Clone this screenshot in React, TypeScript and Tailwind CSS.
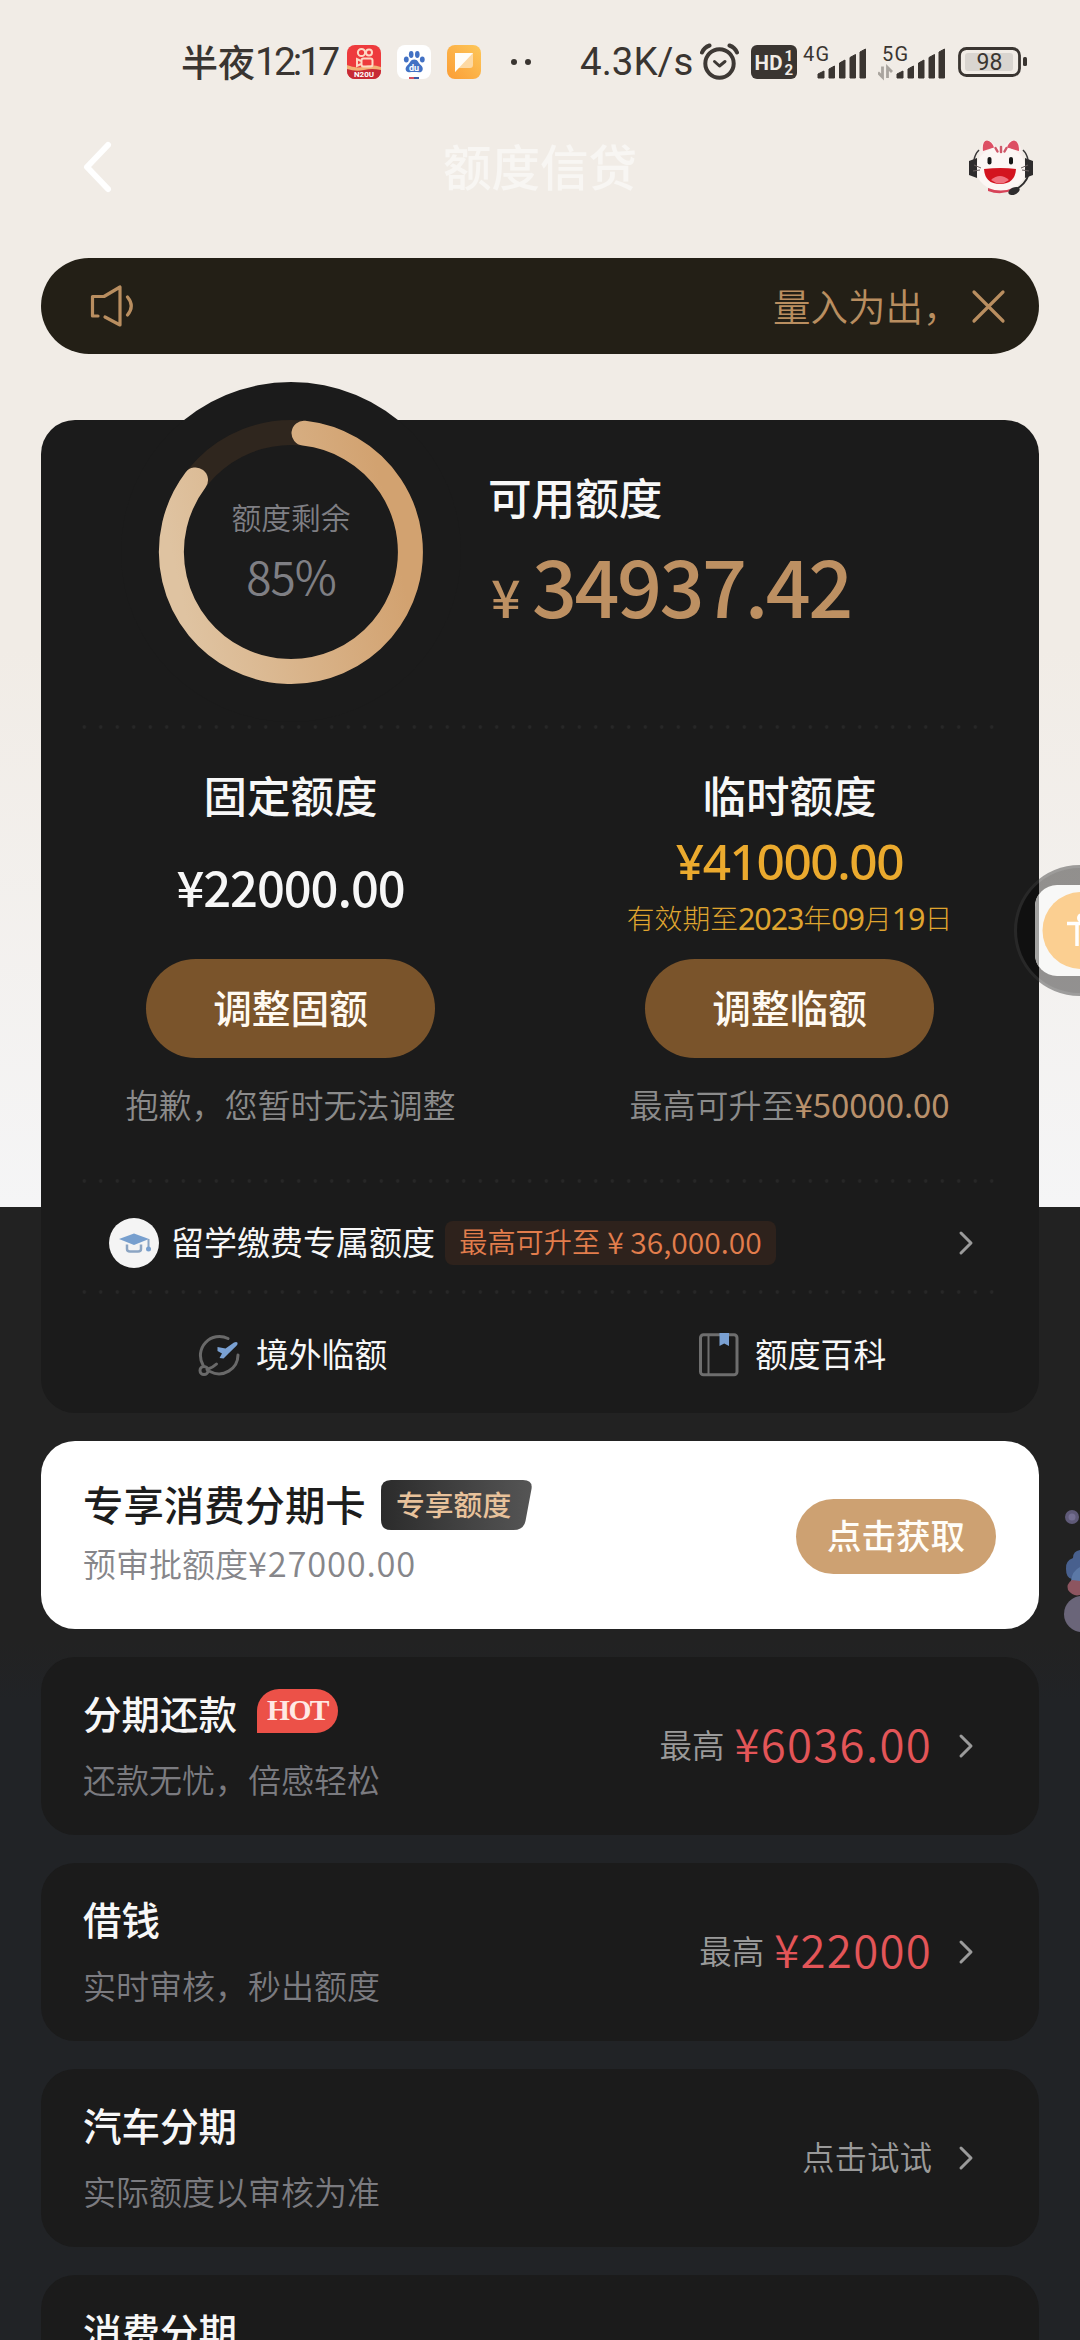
import type { ReactNode } from 'react';
import clsx from 'clsx';

type Product = {
  title: string;
  desc?: string;
  prefix?: string;
  amount?: string;
  action?: string;
  hot?: boolean;
};

const products: Product[] = [
  { title: '分期还款', desc: '还款无忧，倍感轻松', prefix: '最高', amount: '¥6036.00', hot: true },
  { title: '借钱', desc: '实时审核，秒出额度', prefix: '最高', amount: '¥22000' },
  { title: '汽车分期', desc: '实际额度以审核为准', action: '点击试试' },
  { title: '消费分期' },
];

// Roboto for the status bar, Noto Sans where a plain "1" is needed
const roboto = "font-['Roboto','Noto_Sans_CJK_SC',sans-serif]";
const noto = "font-['Noto_Sans','Noto_Sans_CJK_SC',sans-serif]";

/* ---------- icons ---------- */

const Chevron = () => (
  <svg className="h-[26px] w-[16px] shrink-0" viewBox="0 0 16 26" fill="none" stroke="#9b9b9b" strokeWidth="3" strokeLinecap="round" strokeLinejoin="round">
    <path d="M3 3l10 10L3 23" />
  </svg>
);

const KuaishouIcon = () => (
  <svg className="h-[34px] w-[34px]" viewBox="0 0 34 34">
    <rect width="34" height="34" rx="8" fill="#ee3b3d" />
    <path d="M0 20q9 4 17 2t17 0v4a8 8 0 0 1-8 8H8a8 8 0 0 1-8-8z" fill="#c72a35" />
    <path d="M0 20q9 4 17 1.500t17 .5v3q-9-2-17 0T0 24z" fill="#f3b174" />
    <g fill="none" stroke="#fdd9c4" strokeWidth="2">
      <circle cx="14.500" cy="7.500" r="3.600" />
      <circle cx="22" cy="7.500" r="3" />
      <rect x="14.500" y="13.500" width="11" height="8" rx="2" />
      <path d="M14 16l-4-2v7l4-2" />
    </g>
    <text x="17" y="32" fontSize="8" fontWeight="700" fontFamily="Roboto" fill="#fff" textAnchor="middle">N20U</text>
  </svg>
);

const BaiduIcon = () => (
  <svg className="h-[34px] w-[34px]" viewBox="0 0 34 34">
    <rect width="34" height="34" rx="8" fill="#fff" />
    <g fill="#4271c4">
      <ellipse cx="9.300" cy="14.500" rx="2.400" ry="3" />
      <ellipse cx="14.200" cy="9.500" rx="2.300" ry="3.400" />
      <ellipse cx="20.300" cy="9.500" rx="2.300" ry="3.400" />
      <ellipse cx="25.300" cy="14.500" rx="2.400" ry="3" />
      <path d="M17.200 14.500c4 0 4 3.500 6.500 5.500 4 3.500 1.500 7.500-1.500 7.300-3-.3-7-.3-10 0-3.500.2-5.200-4.300-1.500-7.300 2.500-2 2.500-5.500 6.500-5.500z" />
    </g>
    <text x="17" y="25.500" fontSize="9" fontWeight="700" fontFamily="Roboto" fill="#fff" textAnchor="middle">du</text>
    <path d="M12 33h5" stroke="#d5505c" strokeWidth="2" />
    <path d="M17 33h5" stroke="#3d5aa5" strokeWidth="2" />
  </svg>
);

const NoteIcon = () => (
  <svg className="h-[34px] w-[34px]" viewBox="0 0 34 34">
    <defs>
      <linearGradient id="noteBg" x1="0" y1="1" x2="1" y2="0">
        <stop offset="0" stopColor="#fb9d35" />
        <stop offset="1" stopColor="#fdc75a" />
      </linearGradient>
    </defs>
    <rect width="34" height="34" rx="8" fill="url(#noteBg)" />
    <path d="M8 8h18v12q0 3-3 3H11.500L8 27z" fill="#fdd9a3" />
    <path d="M8 8h18L8 27z" fill="#fffdf8" />
  </svg>
);

const AlarmIcon = () => (
  <svg className="h-[38px] w-[40px]" viewBox="0 0 40 38" fill="none" stroke="#3e3935" strokeLinecap="round">
    <circle cx="19.500" cy="20.500" r="14.200" strokeWidth="4" />
    <path d="M14.500 18.500l5 4.500 5.500-4.500" strokeWidth="3" strokeLinejoin="round" />
    <path d="M2 9.500Q4 4.500 9.500 2.500M37 9.500Q35 4.500 29.500 2.500" strokeWidth="4" />
  </svg>
);

const HdIcon = () => (
  <svg className="h-[34px] w-[46px]" viewBox="0 0 46 34">
    <rect width="46" height="34" rx="6" fill="#3a3531" />
    <g fill="#f1ece6" fontFamily="Roboto" fontWeight="700">
      <text x="3.500" y="24.500" fontSize="20.500" textLength="28">HD</text>
      <text x="33.500" y="15.500" fontSize="15">1</text>
      <text x="33.500" y="29.500" fontSize="15">2</text>
    </g>
  </svg>
);

const Signal = ({ label, data }: { label: string; data?: boolean }) => (
  <svg className="h-[40px] w-[68px]" viewBox="0 -2 68 40">
    <text x="4" y="17" fontSize="20" fontFamily="Roboto" fill="#3a3531" textLength="26">{label}</text>
    <path d="M19 34v-4l6-3v7zM30 34V25l5.500-3v12zM40.500 34V19l5.500-3v18zM51 34V13.500l5.500-3V34zM61 34V8l5.500-3v29z" fill="#3a3531" stroke="#3a3531" strokeLinejoin="round" />
    {data && <path d="M4.500 22.500V33L0 28.500M9.500 34V23.500L14 28" fill="none" stroke="#a9a49e" strokeWidth="2.800" />}
  </svg>
);

const Battery = () => (
  <svg className="h-[30px] w-[69px]" viewBox="0 0 69 30">
    <rect x="1.500" y="1.500" width="60" height="27" rx="7" fill="none" stroke="#3a3531" strokeWidth="2.800" />
    <rect x="7" y="6" width="48" height="18" rx="3" fill="#d9d5d0" />
    <rect x="65" y="10" width="4" height="9" rx="1.500" fill="#3a3531" />
    <text x="31.500" y="23" fontSize="23" fontFamily="Roboto" fill="#3a3531" textAnchor="middle">98</text>
  </svg>
);

const CatService = () => (
  <svg className="h-[58px] w-[66px]" viewBox="0 0 66 58">
    <path d="M11 24Q12 3 18 2q6 0 11 8zM55 24Q54 3 46 2q-6 0-11 8z" fill="#f9efed" />
    <path d="M15 13Q14 3 19 2.500q5 1 7 7zM51 13Q51 3 46 2.500q-5 1-7 7z" fill="#dd4f64" />
    <ellipse cx="33" cy="31" rx="25" ry="22" fill="#fcf6f4" />
    <path d="M33 9v5M27.500 10l2 3.500M38.500 10l-2 3.500" stroke="#cf5869" strokeWidth="2.500" strokeLinecap="round" />
    <path d="M20 50q13 5 25 0v2q-12 6-25 1z" fill="#d74358" />
    <path d="M1 23l8-3v20l-8-3zM65 23l-8-3v20l8-3z" fill="#2e2c2d" />
    <path d="M6 22Q7 16 11 12M60 22Q59 16 55 12" stroke="#3a3839" strokeWidth="1.500" fill="none" />
    <path d="M60 38q-3 9-15 15" stroke="#2e2c2d" strokeWidth="2" fill="none" />
    <ellipse cx="46" cy="53" rx="6" ry="3.500" transform="rotate(-25 46 53)" fill="#2e2c2d" />
    <rect x="19.500" y="19" width="4" height="7.500" rx="2" fill="#171717" />
    <rect x="41" y="19" width="4" height="7.500" rx="2" fill="#171717" />
    <path d="M16 31q17-2 32 0-1 15-16 15T16 31z" fill="#d3141f" />
    <path d="M23 42q9-8 18 0-9 7-18 0z" fill="#f0727f" />
    <path d="M6 27l7 3M5 33l7-1M60 27l-7 3M61 33l-7-1" stroke="#6a5f5f" strokeWidth="1" />
  </svg>
);

const SpeakerIcon = () => (
  <svg className="h-[44px] w-[46px]" viewBox="0 0 46 44" fill="none" stroke="#b98e60" strokeWidth="3.200" strokeLinecap="round" strokeLinejoin="round">
    <path d="M8 32H2.500V12.500H14L30 3v38L15 33" />
    <path d="M37.500 13q7.500 9 0 18" />
  </svg>
);

const StudyIcon = () => (
  <svg className="h-[50px] w-[50px]" viewBox="0 0 50 50">
    <circle cx="25" cy="25" r="25" fill="#f4f4f4" />
    <path d="M10 21l15-5.500L40 21l-15 6z" fill="#779fce" />
    <path d="M39.500 21v9" stroke="#8ba4c2" strokeWidth="2" />
    <circle cx="39.500" cy="31" r="2.500" fill="#779fce" />
    <path d="M18 26.500v4.500q0 2.500 3 2.500h8q3 0 3-2.500v-4.500" fill="none" stroke="#8ba4c2" strokeWidth="2.500" />
  </svg>
);

const OverseasIcon = () => (
  <svg className="h-[44px] w-[42px]" viewBox="0 0 42 44" fill="none" strokeLinecap="round">
    <path d="M30 5.500A19 19 0 0 0 5 32M40 22A19 19 0 0 1 12 38.500" stroke="#696969" strokeWidth="3" />
    <circle cx="6" cy="37.500" r="4" stroke="#696969" strokeWidth="3" />
    <path d="M9 36.500q6-2 9.500-5.500" stroke="#696969" strokeWidth="3" />
    <path d="M19.500 14l8 1.500 8.500-6q2.500-1.200 3.500.2.500 1.400-1 3L31 20l-5.500 5.500-4-.5 2.500-4.500-4.500-2.500z" fill="#7aa1d3" />
  </svg>
);

const BookIcon = () => (
  <svg className="h-[44px] w-[40px]" viewBox="0 0 40 44">
    <rect x="1.500" y="1.800" width="36.500" height="40" rx="3" fill="none" stroke="#6e6e6e" strokeWidth="3" />
    <path d="M9.500 2v40" stroke="#6e6e6e" strokeWidth="2" />
    <path d="M20.500 0H30v13l-4.800-2.500-4.700 2.500z" fill="#7aa1d3" />
  </svg>
);

/* ---------- sections ---------- */

const StatusBar = () => (
  <div className="flex h-[124px] items-center pl-[181px] text-[#3a3531]">
    <div className="flex w-[166px] items-center whitespace-nowrap text-[37px] font-medium leading-[50px]">
      <span className="-mt-[2px]">半夜</span>
      <span className={clsx(roboto, 'text-[39px] font-normal tracking-[-3px]')}>12:17</span>
    </div>
    <div className="flex gap-4">
      <KuaishouIcon />
      <BaiduIcon />
      <NoteIcon />
    </div>
    <div className="ml-[30px] flex gap-[8px]">
      <i className="h-[6px] w-[6px] rounded-full bg-[#3a3531]"></i>
      <i className="h-[6px] w-[6px] rounded-full bg-[#3a3531]"></i>
    </div>
    <div className={clsx(roboto, 'ml-[49px] w-[120px] text-[38.5px] leading-[50px]')}>4.3K/s</div>
    <AlarmIcon />
    <div className="ml-[11px] flex"><HdIcon /></div>
    <div className="ml-[2px] flex"><Signal label="4G" /></div>
    <div className="ml-[11px] flex"><Signal label="5G" data /></div>
    <div className="ml-[12px] flex"><Battery /></div>
  </div>
);

const NavBar = () => (
  <div className="flex h-[86px] items-center pl-[82px] pr-[15px]">
    <svg className="h-[54px] w-[32px]" viewBox="0 0 32 54" fill="none" stroke="#fff" strokeWidth="6" strokeLinecap="round" strokeLinejoin="round">
      <path d="M26 5L5 27l21 22" />
    </svg>
    <h1 className="-mt-[4px] ml-[329px] w-[200px] whitespace-nowrap text-[48.5px] font-medium leading-[60px] text-[#f8f6f3]">额度信贷</h1>
    <div className="ml-[325px]"><CatService /></div>
  </div>
);

const Notice = () => (
  <div className="mx-[41px] mt-[48px] flex h-[96px] items-center rounded-full bg-[#231f16] text-[#b98e60]">
    <div className="ml-[49px] w-[683px]"><SpeakerIcon /></div>
    <div className="-mt-[3px] w-[190px] whitespace-nowrap text-[37.5px] font-[350] leading-[50px]">量入为出，</div>
    <svg className="ml-[7px] h-[36px] w-[36px]" viewBox="0 0 36 36" stroke="currentColor" strokeWidth="3.200" strokeLinecap="round">
      <path d="M4 4l29 29M33 4L4 33" />
    </svg>
  </div>
);

const Dots = () => (
  <div className="mx-[35px] h-[4px] bg-[radial-gradient(circle_at_center,#272727_1.4px,transparent_2.1px)] bg-[length:16.5px_4px]"></div>
);

const Gauge = () => (
  <div className="relative -mt-[38px] ml-[80px] h-[340px] w-[340px] shrink-0">
    <svg className="h-[340px] w-[340px]" viewBox="0 0 340 340" fill="none">
      <defs>
        <linearGradient id="gauge" x1="0.900" y1="0.300" x2="0" y2="0.500">
          <stop offset="0" stopColor="#d2a270" />
          <stop offset="1" stopColor="#dfc3a1" />
        </linearGradient>
      </defs>
      <circle cx="170" cy="170" r="170" fill="#1b1b1b" />
      <circle cx="170" cy="170" r="119.500" stroke="#2f261e" strokeWidth="25" />
      <path d="M183 51.200A119.500 119.500 0 1 1 74.500 98" stroke="url(#gauge)" strokeWidth="25" strokeLinecap="round" />
    </svg>
    <div className="absolute inset-0 flex flex-col items-center pt-[114px] text-[#7f7f84]">
      <div className="text-[29.8px] font-[350] leading-[40px]">额度剩余</div>
      <div className="mt-[14px] text-[46px] font-[350] leading-[50px] tracking-[-1px]">85%</div>
    </div>
  </div>
);

const Pill = ({ children }: { children: ReactNode }) => (
  <button className="h-[99px] w-[289px] rounded-full bg-[#7a542b] pb-[6px] text-[38.7px] font-medium leading-[50px] text-[#fffaf2]">{children}</button>
);

const QuotaCard = () => (
  <div className="mx-[41px] mt-[66px] h-[993px] rounded-[34px] bg-[#1b1b1b]">
    <div className="flex h-[305px]">
      <Gauge />
      <div className="ml-[27px] pt-[46px]">
        <div className="text-[43.6px] font-medium leading-[60px] text-[#f7f7f7]">可用额度</div>
        <div className="mt-[13px] flex h-[90px] items-baseline font-medium text-[#bd9062]">
          <span className="ml-[3px] w-[41px] text-[52px] leading-[90px]">¥</span>
          <span className="text-[79px] leading-[90px] tracking-[-2.5px]">34937.42</span>
        </div>
      </div>
    </div>
    <Dots />
    <div className="grid h-[450px] grid-cols-2">
      <div className="flex flex-col items-center pt-[36px]">
        <div className="text-[43.5px] font-medium leading-[60px] text-[#f7f7f7]">固定额度</div>
        <div className="mt-[31px] text-[49px] font-medium leading-[60px] tracking-[-1.1px] text-[#f7f7f7]">¥22000.00</div>
        <div className="mt-[43px]"><Pill>调整固额</Pill></div>
        <div className="mt-[21px] text-[33px] font-[350] leading-[50px] text-[#8b8b8b]">抱歉，您暂时无法调整</div>
      </div>
      <div className="flex flex-col items-center pt-[36px]">
        <div className="text-[43.5px] font-medium leading-[60px] text-[#f7f7f7]">临时额度</div>
        <div className={clsx(noto, 'mt-[11px] text-[49.5px] font-medium leading-[50px] tracking-[-1.4px] text-[#ebaa2e]')}>¥41000.00</div>
        <div className={clsx(noto, 'mt-[12px] flex items-center whitespace-nowrap text-[30.5px] leading-[40px] tracking-[-1.1px] text-[#dfa42f]')}>
          <span className="text-[27.8px] font-light tracking-normal">有效期至</span>
          <span>2023</span>
          <span className="text-[27.8px] font-light tracking-normal">年</span>
          <span>09</span>
          <span className="text-[27.8px] font-light tracking-normal">月</span>
          <span>19</span>
          <span className="text-[27.8px] font-light tracking-normal">日</span>
        </div>
        <div className="mt-[21px]"><Pill>调整临额</Pill></div>
        <div className="mt-[21px] whitespace-nowrap text-[33px] font-[350] leading-[50px] text-[#8b8b8b]">
          最高可升至<span className="font-normal tracking-[-0.1px] text-[#b8906b]">¥50000.00</span>
        </div>
      </div>
    </div>
    <Dots />
    <div className="flex h-[107px] items-center pl-[68px] pt-[12px]">
      <StudyIcon />
      <div className="-mt-[4px] ml-[12px] w-[274px] whitespace-nowrap text-[33px] leading-[50px] text-[#f7f7f7]">留学缴费专属额度</div>
      <div className="flex h-[44px] w-[331px] items-center justify-center rounded-[8px] bg-[#2e221c] text-[#e27d4c]">
        <span className="-mt-[3px] text-[28.2px] font-[350]">最高可升至</span>
        <span className="-mt-[3px] ml-[7px] text-[30px] font-[350]">¥ 36,000.00</span>
      </div>
      <div className="ml-[182px]"><Chevron /></div>
    </div>
    <Dots />
    <div className="grid h-[119px] grid-cols-2 pt-[2px] text-[32.8px] text-[#f7f7f7]">
      <div className="flex items-center pl-[157px]">
        <OverseasIcon />
        <span className="-mt-[4px] ml-[16px]">境外临额</span>
      </div>
      <div className="flex items-center pl-[159px]">
        <BookIcon />
        <span className="-mt-[4px] ml-[16px]">额度百科</span>
      </div>
    </div>
  </div>
);

const InstalmentCard = () => (
  <div className="mx-[41px] mt-[28px] flex h-[188px] items-start rounded-[34px] bg-white pl-[42px] pr-[43px]">
    <div className="flex-1 pt-[36px]">
      <div className="flex h-[56px] items-center">
        <span className="-mt-[2px] w-[298px] whitespace-nowrap text-[40.4px] font-medium text-[#1d1d1d]">专享消费分期卡</span>
        <div className="relative h-[50px] w-[151px]">
          <svg className="absolute inset-0" width="151" height="50" viewBox="0 0 151 50">
            <defs>
              <linearGradient id="tag" x1="0" y1="0" x2="1" y2="0">
                <stop offset="0" stopColor="#2b2b2b" />
                <stop offset="1" stopColor="#555" />
              </linearGradient>
            </defs>
            <path d="M10 0h132q10 0 8.500 9l-6 32q-2 9-12 9H10Q0 50 0 40V10Q0 0 10 0z" fill="url(#tag)" />
          </svg>
          <span className="relative ml-[15px] block whitespace-nowrap text-[28.8px] font-medium leading-[48px] text-[#e8c29b]">专享额度</span>
        </div>
      </div>
      <div className="mt-[4px] text-[33px] font-[350] leading-[50px] text-[#86868a]">
        预审批额度<span className="text-[34.5px] tracking-[0.8px]">¥27000.00</span>
      </div>
    </div>
    <button className="mt-[58px] h-[75px] w-[200px] rounded-full bg-[#cda172] pb-[3px] text-[34.5px] font-medium text-[#fffdf8]">点击获取</button>
  </div>
);

const ProductRow = ({ item }: { item: Product }) => (
  <div className="mx-[41px] mt-[28px] flex h-[178px] items-center rounded-[34px] bg-[#1b1b1b] pl-[42px] pr-[65px]">
    <div className="flex-1 self-start pt-[30px]">
      <div className="flex h-[50px] items-center">
        <span className="text-[38.5px] font-medium leading-[50px] text-[#f7f7f7]">{item.title}</span>
        {item.hot && (
          <span className="-mt-[3px] ml-[20px] flex h-[44px] w-[81px] items-center justify-center rounded-[22px] rounded-bl-none bg-[#ec5148] font-['Liberation_Serif',serif] text-[29.5px] font-bold tracking-[-1.5px] text-[#ffe9e4]">HOT</span>
        )}
      </div>
      {item.desc && <div className="mt-[17px] text-[33px] font-[350] leading-[50px] text-[#7b7b80]">{item.desc}</div>}
    </div>
    <div className="flex items-center">
      {item.prefix && <span className="-mt-[3px] mr-[10px] text-[32.5px] font-[350] text-[#9a9a9a]">{item.prefix}</span>}
      {item.amount && <span className="-mt-[8px] text-[45.5px] font-[350] leading-[50px] tracking-[1.3px] text-[#e35558]">{item.amount}</span>}
      {item.action && <span className="-mt-[3px] text-[32.5px] font-[350] text-[#9a9a9a]">{item.action}</span>}
      <div className="ml-[26px]"><Chevron /></div>
    </div>
  </div>
);

/* floating widgets clipped by the right edge */
const FloatingHelper = () => (
  <div className="absolute left-[1014px] top-[865px] h-[131px] w-[131px] rounded-full border-[3px] border-white/10 bg-black/40">
    <svg className="absolute left-[18px] top-[17px]" width="91" height="91" viewBox="0 0 91 91">
      <rect width="91" height="91" rx="22" fill="#f8f8f7" />
      <path d="M4 9Q0 14 0 22v47q0 8 4 13z" fill="#a3a3a2" />
      <circle cx="46" cy="45.500" r="38.500" fill="#fbcf91" />
      <circle cx="47" cy="33" r="5" fill="#fff" />
      <path d="M32 38.500h30M42 38.500V61M52 38.500V61" stroke="#fff" strokeWidth="3.500" fill="none" />
    </svg>
  </div>
);

const Sticker = () => (
  <svg className="absolute left-[1060px] top-[1505px]" width="20" height="130" viewBox="0 0 20 130">
    <circle cx="12" cy="12" r="7" fill="#5f5a78" />
    <circle cx="12" cy="12" r="3.500" fill="#746f92" />
    <path d="M20 45q-7 1-7 8-8 3-7 11 0 9 6 10 3 6 8 4z" fill="#48608e" />
    <path d="M20 62q-8 4-9 14h9z" fill="#5b78a6" />
    <path d="M12 75q-6 4-4 10 5 7 12 5V76z" fill="#8d5560" />
    <circle cx="22" cy="109" r="18" fill="#6a6579" />
  </svg>
);

export default function App() {
  return (
    <div className="relative flex h-[2340px] w-[1080px] flex-col overflow-hidden bg-[linear-gradient(to_bottom,#f1ece6_0,#f1ece6_650px,#f5f5f6_1207px,#222222_1207px,#222222_1640px,#212326_1700px,#212326_100%)] font-['Noto_Sans_CJK_SC',sans-serif] *:shrink-0">
      <StatusBar />
      <NavBar />
      <Notice />
      <QuotaCard />
      <InstalmentCard />
      {products.map((item) => (
        <ProductRow key={item.title} item={item} />
      ))}
      <FloatingHelper />
      <Sticker />
    </div>
  );
}
